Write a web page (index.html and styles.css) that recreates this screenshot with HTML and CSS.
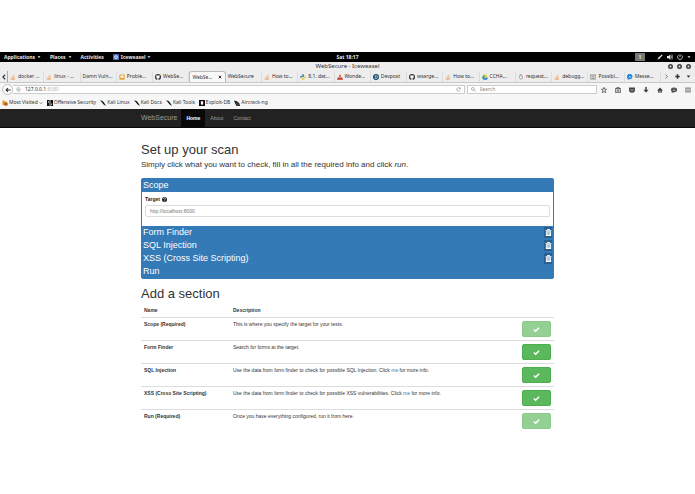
FILE: index.html
```
<!DOCTYPE html>
<html lang="en">
<head>
    <meta charset="UTF-8">
    <meta name="viewport" content="width=device-width, initial-scale=1.0">
    <title>WebSecure</title>
    <link rel="stylesheet" href="styles.css">
</head>
<body>
    <svg class="sprite" aria-hidden="true">
        <symbol id="stack" viewBox="0 0 16 16"><path d="M3 10v5h9v-5M5 12.500h5M5 9.500l5 1M6 6l5 3M9 2l3 5" fill="none" stroke="#e99a58" stroke-width="1.600"/></symbol>
        <symbol id="note" viewBox="0 0 16 16"><rect x="1" y="1" width="14" height="14" rx="2" fill="#e5a537"/><path d="M4 4h8v6H4z" fill="#fff"/></symbol>
        <symbol id="github" viewBox="0 0 16 16"><circle cx="8" cy="8" r="8" fill="#333"/><path d="M4 3l2.500 1h3L12 3l.5 3c1 3-1 4.500-3 5v5h-3v-2c-2 .5-2.500-1-3-1.500 1.500 0 1.500 1 3 .5V11c-2-.5-4-2-3-5z" fill="#fff"/></symbol>
        <symbol id="python" viewBox="0 0 16 16"><path d="M4 2q4-3 7 0v5H5q-2 0-2 4Q0 11 0 8t3-3h5V4H4z" fill="#3c75aa"/><path d="M12 14q-4 3-7 0V9h6q2 0 2-4 3 0 3 3t-3 3H8v1h4z" fill="#e7c93b"/></symbol>
        <symbol id="flame" viewBox="0 0 16 16"><path d="M8 0l3 7H5zM2 9h12l2 6H0z" fill="#c33b30"/></symbol>
        <symbol id="devpost" viewBox="0 0 16 16"><circle cx="8" cy="8" r="8" fill="#174e70"/><path d="M6 4h2q4 0 4 4t-4 4H6z" fill="none" stroke="#fff" stroke-width="1.500"/></symbol>
        <symbol id="drive" viewBox="0 0 16 16"><path d="M5 1L0 10l3 5 5-9z" fill="#22a565"/><path d="M5 1h6l5 9h-6z" fill="#f4c430"/><path d="M3 15l3-5h10l-3 5z" fill="#3879d9"/></symbol>
        <symbol id="request" viewBox="0 0 16 16"><path d="M4 2h7M5 4q-4 8 3 10 6-1 4-7L8 4z" fill="none" stroke="#777" stroke-width="1.500"/></symbol>
        <symbol id="page" viewBox="0 0 16 16"><path d="M1 2h14v12H1zM1 5h14M5 8h6v4H5z" fill="none" stroke="#777" stroke-width="1.500"/></symbol>
        <symbol id="messenger" viewBox="0 0 16 16"><path d="M8 0a8 7 0 1 1-3 14l-3 2v-4A7 7 0 0 1 8 0z" fill="#1685dc"/><path d="M3 10l4-5 2 3 4-2-4 4-2-2z" fill="#fff"/></symbol>
        <symbol id="window" viewBox="0 0 16 16"><rect width="16" height="16" rx="1" fill="#4869b5"/><circle cx="8" cy="8" r="5" fill="#dce8ff"/><path d="M6 5l5 3-4 3z" fill="#4869b5"/></symbol>
        <symbol id="folder" viewBox="0 0 16 16"><path d="M1 1h6v3h6v9H1z" fill="#e49a32"/><path d="M6 7h9v8H6z" fill="#b65d27"/></symbol>
        <symbol id="offsec" viewBox="0 0 16 16"><path d="M0 0h7v16H0zM9 0h7v16H9z" fill="#111"/><path d="M3 3h2v4H3zM11 9h2v4h-2z" fill="#fff"/></symbol>
        <symbol id="kali" viewBox="0 0 16 16"><path d="M0 1l6 1 5 5 5 9-7-5-4-5z" fill="#111"/></symbol>
        <symbol id="exploit" viewBox="0 0 16 16"><path d="M0 0h16v16H0z" fill="#111"/><path d="M5 3h6v6l-2 4H7L5 9z" fill="#fff"/></symbol>
        <symbol id="aircrack" viewBox="0 0 16 16"><path d="M0 1l8 2 6 5 2 8H7L3 9z" fill="#222"/><path d="M5 11l6-4M8 14l5-4" stroke="#bbb"/></symbol>
        <symbol id="back" viewBox="0 0 16 16"><path d="M15 8H3M8 3L3 8l5 5" fill="none" stroke="currentColor" stroke-width="3"/></symbol>
        <symbol id="globe" viewBox="0 0 16 16"><circle cx="8" cy="8" r="6.500" fill="none" stroke="currentColor"/><path d="M2 8h12M8 2q-5 6 0 12 5-6 0-12" fill="none" stroke="currentColor"/></symbol>
        <symbol id="reload" viewBox="0 0 16 16"><path d="M13 10a5.500 5.500 0 1 1-1-6M14 1v5H9" fill="none" stroke="currentColor" stroke-width="2"/></symbol>
        <symbol id="search" viewBox="0 0 16 16"><circle cx="6" cy="6" r="4.500" fill="none" stroke="currentColor" stroke-width="2"/><path d="M9.500 9.500L15 15" stroke="currentColor" stroke-width="2"/></symbol>
        <symbol id="star" viewBox="0 0 16 16"><path d="M8 1l2 5h5l-4 4 1.500 5L8 12l-4.500 3L5 10 1 6h5z" fill="none" stroke="currentColor" stroke-width="2"/></symbol>
        <symbol id="clipboard" viewBox="0 0 16 16"><path d="M1 4h14v11H1zM5 4V1h6v3M4 8h8M4 11h8" fill="none" stroke="currentColor" stroke-width="2"/></symbol>
        <symbol id="pocket" viewBox="0 0 16 16"><path d="M0 1h16v6a8 8 0 0 1-16 0z" fill="currentColor"/><path d="M4 6l4 4 4-4" fill="none" stroke="#f2f2f2" stroke-width="2"/></symbol>
        <symbol id="download" viewBox="0 0 16 16"><path d="M6 0h4v7h5l-7 8-7-8h5z" fill="currentColor"/></symbol>
        <symbol id="home" viewBox="0 0 16 16"><path d="M8 1l8 8h-3v6h-4v-5H7v5H3V9H0z" fill="currentColor"/></symbol>
        <symbol id="chat" viewBox="0 0 16 16"><ellipse cx="8" cy="7.500" rx="8" ry="6.500" fill="currentColor"/><path d="M2 11v5l6-3z" fill="currentColor"/><path d="M4 8q4 4 8 0M5 5h2M9 5h2" fill="none" stroke="#f2f2f2" stroke-width="1.500"/></symbol>
        <symbol id="menu" viewBox="0 0 16 16"><path d="M0 3h16M0 8h16M0 13h16" stroke="currentColor" stroke-width="2"/></symbol>
        <symbol id="plus" viewBox="0 0 16 16"><path d="M8 1v14M1 8h14" stroke="currentColor" stroke-width="5"/></symbol>
        <symbol id="caret" viewBox="0 0 16 16"><path d="M2 5h12l-6 7z" fill="currentColor"/></symbol>
        <symbol id="down" viewBox="0 0 16 16"><path d="M2 5l6 6 6-6" fill="none" stroke="currentColor" stroke-width="2"/></symbol>
        <symbol id="left" viewBox="0 0 16 16"><path d="M11 2L5 8l6 6" fill="none" stroke="currentColor" stroke-width="3"/></symbol>
        <symbol id="right" viewBox="0 0 16 16"><path d="M5 2l6 6-6 6" fill="none" stroke="currentColor" stroke-width="2"/></symbol>
        <symbol id="close" viewBox="0 0 16 16"><path d="M3 3l10 10M13 3L3 13" stroke="currentColor" stroke-width="4"/></symbol>
        <symbol id="ring" viewBox="0 0 16 16"><circle cx="8" cy="8" r="8" fill="#444"/><circle cx="8" cy="8" r="3" fill="#ddd"/></symbol>
        <symbol id="pen" viewBox="0 0 16 16"><path d="M1 15l3-6 9-8 2 2-8 9z" fill="currentColor"/></symbol>
        <symbol id="sound" viewBox="0 0 16 16"><path d="M0 5h4l5-4v14l-5-4H0z" fill="currentColor"/><path d="M11 4q3 4 0 8M13 1q5 7 0 14" fill="none" stroke="currentColor" stroke-width="1.500"/></symbol>
        <symbol id="power" viewBox="0 0 16 16"><path d="M4 3a6.500 6.500 0 1 0 8 0M8 0v8" fill="none" stroke="currentColor" stroke-width="2"/></symbol>
        <symbol id="help" viewBox="0 0 16 16"><circle cx="8" cy="8" r="8" fill="currentColor"/><path d="M5 6q0-3 3-3t3 2.500Q11 7 8 9v1M8 11.500V14" fill="none" stroke="#fff" stroke-width="2"/></symbol>
        <symbol id="trash" viewBox="0 0 16 16"><path d="M5 2V0h6v2h4v2H1V2zM2 5h12v11H2z" fill="currentColor"/><path d="M5 7v6M8 7v6M11 7v6" stroke="#337ab7" stroke-width="1.200"/></symbol>
        <symbol id="check" viewBox="0 0 16 16"><path d="M2 8l4 4 8-8" fill="none" stroke="currentColor" stroke-width="3.500"/></symbol>
    </svg>

    <header class="desktop-bar">
        <nav class="desktop-menu">
            <button>Applications <svg><use href="#caret"/></svg></button>
            <button>Places <svg><use href="#caret"/></svg></button>
            <button>Activities</button>
            <button><svg class="app-icon"><use href="#window"/></svg> Iceweasel <svg><use href="#caret"/></svg></button>
        </nav>
        <time>Sat 18:17</time>
        <div class="tray">
            <span class="workspace">1</span>
            <svg><use href="#pen"/></svg>
            <svg><use href="#sound"/></svg>
            <svg><use href="#power"/></svg>
            <svg class="small"><use href="#caret"/></svg>
        </div>
    </header>

    <section class="browser">
        <div class="titlebar">
            <span class="window-title">WebSecure - Iceweasel</span>
            <div class="window-buttons">
                <button aria-label="Minimize"><svg><use href="#ring"/></svg></button>
                <button aria-label="Maximize"><svg><use href="#ring"/></svg></button>
                <button aria-label="Close"><svg><use href="#ring"/></svg></button>
            </div>
        </div>
        <div class="tabbar">
            <button class="scroll-left" aria-label="Scroll left"><svg><use href="#left"/></svg></button>
            <div class="tabs">
                <button class="tab"><svg><use href="#stack"/></svg>docker ...</button>
                <button class="tab"><svg><use href="#stack"/></svg>linux - ...</button>
                <button class="tab">Damn Vuln...</button>
                <button class="tab"><svg><use href="#note"/></svg>Proble...</button>
                <button class="tab"><svg><use href="#github"/></svg>WebSe...</button>
                <button class="tab active">WebSe...<svg class="tab-close"><use href="#close"/></svg></button>
                <button class="tab">WebSecure</button>
                <button class="tab"><svg><use href="#stack"/></svg>How to...</button>
                <button class="tab"><svg><use href="#python"/></svg>8.1. dat...</button>
                <button class="tab"><svg><use href="#flame"/></svg>Wonde...</button>
                <button class="tab"><svg><use href="#devpost"/></svg>Devpost</button>
                <button class="tab"><svg><use href="#github"/></svg>wsarge...</button>
                <button class="tab"><svg><use href="#stack"/></svg>How to...</button>
                <button class="tab"><svg><use href="#drive"/></svg>CCHA...</button>
                <button class="tab"><svg><use href="#request"/></svg>request...</button>
                <button class="tab"><svg><use href="#stack"/></svg>debugg...</button>
                <button class="tab"><svg><use href="#page"/></svg>Possibl...</button>
                <button class="tab"><svg><use href="#messenger"/></svg>Messe...</button>
            </div>
            <div class="tab-tools">
                <button aria-label="Scroll right"><svg><use href="#right"/></svg></button>
                <button aria-label="New tab"><svg><use href="#plus"/></svg></button>
                <button aria-label="All tabs"><svg><use href="#caret"/></svg></button>
            </div>
        </div>
        <div class="toolbar">
            <button class="back" aria-label="Back"><svg><use href="#back"/></svg></button>
            <div class="address">
                <svg><use href="#globe"/></svg>
                <a href="#">127.0.0.1<span>:8080</span></a>
                <button aria-label="Reload"><svg><use href="#reload"/></svg></button>
            </div>
            <div class="search">
                <svg><use href="#search"/></svg>
                <input type="text" placeholder="Search" aria-label="Search">
            </div>
            <div class="tools">
                <button aria-label="Bookmark"><svg><use href="#star"/></svg></button>
                <button aria-label="Bookmarks list"><svg><use href="#clipboard"/></svg></button>
                <button aria-label="Pocket"><svg><use href="#pocket"/></svg></button>
                <button aria-label="Downloads"><svg><use href="#download"/></svg></button>
                <button aria-label="Home page"><svg><use href="#home"/></svg></button>
                <button aria-label="Chat"><svg><use href="#chat"/></svg></button>
                <button aria-label="Menu"><svg><use href="#menu"/></svg></button>
            </div>
        </div>
        <nav class="bookmarks">
            <a href="#"><svg><use href="#folder"/></svg>Most Visited<svg class="small"><use href="#down"/></svg></a>
            <a href="#"><svg><use href="#offsec"/></svg>Offensive Security</a>
            <a href="#"><svg><use href="#kali"/></svg>Kali Linux</a>
            <a href="#"><svg><use href="#kali"/></svg>Kali Docs</a>
            <a href="#"><svg><use href="#kali"/></svg>Kali Tools</a>
            <a href="#"><svg><use href="#exploit"/></svg>Exploit-DB</a>
            <a href="#"><svg><use href="#aircrack"/></svg>Aircrack-ng</a>
        </nav>
    </section>

    <nav class="navbar">
        <div class="container">
            <a class="brand" href="#">WebSecure</a>
            <a class="active" href="#">Home</a>
            <a href="#">About</a>
            <a href="#">Contact</a>
        </div>
    </nav>

    <main class="container">
        <h1>Set up your scan</h1>
        <p class="lead">Simply click what you want to check, fill in all the required info and click <em>run</em>.</p>

        <div class="panel">
            <h2 class="panel-heading">Scope</h2>
            <div class="panel-body">
                <label for="target">Target <svg><use href="#help"/></svg></label>
                <input id="target" type="text" placeholder="http://localhost:8000">
            </div>
            <h2 class="panel-heading">Form Finder <button aria-label="Remove Form Finder"><svg><use href="#trash"/></svg></button></h2>
            <h2 class="panel-heading">SQL Injection <button aria-label="Remove SQL Injection"><svg><use href="#trash"/></svg></button></h2>
            <h2 class="panel-heading">XSS (Cross Site Scripting) <button aria-label="Remove XSS"><svg><use href="#trash"/></svg></button></h2>
            <h2 class="panel-heading">Run</h2>
        </div>

        <h1>Add a section</h1>
        <table>
            <thead>
                <tr><th class="name">Name</th><th>Description</th><th class="action"></th></tr>
            </thead>
            <tbody>
                <tr>
                    <th>Scope (Required)</th>
                    <td>This is where you specify the target for your tests.</td>
                    <td><button class="add" aria-label="Add Scope" disabled><svg><use href="#check"/></svg></button></td>
                </tr>
                <tr>
                    <th>Form Finder</th>
                    <td>Search for forms at the target.</td>
                    <td><button class="add" aria-label="Add Form Finder"><svg><use href="#check"/></svg></button></td>
                </tr>
                <tr>
                    <th>SQL Injection</th>
                    <td>Use the data from form finder to check for possible SQL Injection. Click <a href="#">me</a> for more info.</td>
                    <td><button class="add" aria-label="Add SQL Injection"><svg><use href="#check"/></svg></button></td>
                </tr>
                <tr>
                    <th>XSS (Cross Site Scripting)</th>
                    <td>Use the data from form finder to check for possible XSS vulnerabilities. Click <a href="#">me</a> for more info.</td>
                    <td><button class="add" aria-label="Add XSS"><svg><use href="#check"/></svg></button></td>
                </tr>
                <tr>
                    <th>Run (Required)</th>
                    <td>Once you have everything configured, run it from here.</td>
                    <td><button class="add" aria-label="Add Run" disabled><svg><use href="#check"/></svg></button></td>
                </tr>
            </tbody>
        </table>
    </main>
</body>
</html>
```
FILE: styles.css
```
:root {
    --ui-font: "Noto Sans", sans-serif;
    --page-font: "Liberation Sans", sans-serif;
    --blue: #337ab7;
}
* {
    box-sizing: border-box;
}
body {
    margin: 0;
    padding: 52px 0;
    background: #fff;
    color: #333;
    font: 5px/7px var(--page-font);
}
a {
    color: inherit;
    text-decoration: none;
}
button {
    display: flex;
    align-items: center;
    padding: 0;
    border: none;
    background: none;
    color: inherit;
    font: inherit;
    white-space: nowrap;
}
input {
    min-width: 0;
    font: inherit;
}
svg {
    flex: none;
    width: 6px;
    height: 6px;
}
svg.small {
    width: 4px;
    height: 4px;
}
.sprite {
    display: none;
}

.desktop-bar {
    display: grid;
    grid-template-columns: 1fr auto 1fr;
    align-items: center;
    height: 10px;
    padding: 0 4px;
    background: #000;
    color: #e8e8e8;
    font: bold 5px/10px var(--ui-font);
}
.desktop-menu {
    display: flex;
    gap: 9px;
}
.desktop-menu button {
    gap: 2px;
}
.desktop-menu svg {
    width: 4px;
    height: 4px;
}
.desktop-menu .app-icon {
    width: 6px;
    height: 6px;
}
.tray {
    display: flex;
    align-items: center;
    justify-content: flex-end;
    gap: 4px;
}
.workspace {
    width: 10px;
    height: 8px;
    margin-right: 8px;
    background: #777;
    line-height: 8px;
    text-align: center;
}

.browser {
    background: #f2f2f2;
    color: #333;
    font: 5px/7px var(--ui-font);
}
.titlebar {
    display: grid;
    grid-template-columns: 1fr auto 1fr;
    align-items: center;
    height: 9px;
    padding: 0 4px;
    background: #ededed;
}
.window-title {
    grid-column: 2;
    font-size: 6px;
}
.window-buttons {
    display: flex;
    justify-content: flex-end;
    gap: 4px;
}
.window-buttons svg {
    width: 5px;
    height: 5px;
}
.tabbar {
    display: flex;
    height: 12px;
    border-bottom: 1px solid #c8c8c8;
    background: #ededed;
}
.scroll-left {
    width: 8px;
    justify-content: center;
    border-right: 1px solid #aaa;
}
.tabs {
    flex: 1;
    display: grid;
    grid-template-columns: repeat(18, 1fr);
    min-width: 0;
}
.tab {
    gap: 2px;
    min-width: 0;
    padding-left: 2px;
    border-right: 1px solid #ddd;
    overflow: hidden;
}
.tab.active {
    border: 1px solid #bbb;
    border-bottom: none;
    border-radius: 3px 3px 0 0;
    background: #f8f8f8;
}
.tab .tab-close {
    width: 4px;
    height: 4px;
    margin: 0 3px 0 auto;
}
.tab-tools {
    display: flex;
    align-items: center;
    gap: 6px;
    padding: 0 4px 0 3px;
}
.tab-tools svg {
    width: 5px;
    height: 5px;
}

.toolbar {
    display: flex;
    align-items: center;
    height: 13px;
    padding: 0 4px 0 2px;
    background: #f6f6f6;
}
.back {
    justify-content: center;
    width: 11px;
    height: 11px;
    border: 1px solid #bbb;
    border-radius: 50%;
    background: #fff;
}
.address,
.search {
    display: flex;
    align-items: center;
    gap: 4px;
    height: 9px;
    padding: 0 3px;
    border: 1px solid #ccc;
    background: #fff;
}
.address {
    flex: 1;
    border-left: none;
}
.address svg,
.search svg {
    width: 5px;
    height: 5px;
    color: #888;
}
.address span {
    color: #bbb;
}
.address button {
    margin-left: auto;
}
.search {
    width: 19%;
    margin-left: 2px;
}
.search input {
    flex: 1;
    padding: 0;
    border: none;
    background: none;
}
.search input::placeholder {
    color: #888;
}
.tools {
    display: flex;
    justify-content: space-between;
    width: 13%;
    margin-left: 4px;
    color: #444;
}
.bookmarks {
    display: flex;
    align-items: center;
    gap: 4px;
    height: 13px;
    padding: 0 2px;
    background: #f6f6f6;
}
.bookmarks a {
    display: flex;
    align-items: center;
    gap: 1px;
}

.container {
    width: 60%;
    margin: 0 auto;
    padding: 0 2px;
}
.navbar {
    background: #222;
    border-bottom: 1px solid #080808;
    color: #9d9d9d;
}
.navbar .container {
    display: flex;
    line-height: 18px;
}
.navbar a {
    padding: 0 5px;
}
.navbar .brand {
    padding: 0 4px 0 0;
    font-size: 7px;
}
.navbar .active {
    background: #080808;
    color: #fff;
    font-weight: bold;
}

h1 {
    margin: 0 0 3px;
    font-size: 13px;
    font-weight: 500;
    line-height: 15px;
}
main h1:first-child {
    margin-top: 14px;
}
.lead {
    margin: 0 0 8px;
    font-size: 8px;
    line-height: 10px;
}
.panel {
    margin-bottom: 7px;
    border: 1px solid var(--blue);
    border-radius: 2px;
    background: var(--blue);
}
.panel-heading {
    display: flex;
    align-items: center;
    justify-content: space-between;
    margin: 0;
    padding: 0 1px;
    color: #fff;
    font-size: 9px;
    font-weight: 500;
    line-height: 13px;
}
.panel-heading button {
    justify-content: center;
    width: 8px;
    height: 11px;
    background: #286090;
}
.panel-heading svg {
    width: 7px;
    height: 7px;
}
.panel-body {
    padding: 4px 3px 9px;
    background: #fff;
}
.panel-body label {
    display: flex;
    align-items: center;
    gap: 2px;
    margin-bottom: 2px;
    color: #222;
    font-weight: bold;
}
.panel-body svg {
    width: 5px;
    height: 5px;
}
.panel-body input {
    display: block;
    width: 100%;
    height: 12px;
    padding: 0 4px;
    border: 1px solid #ddd;
    border-radius: 2px;
}
.panel-body input::placeholder {
    color: #777;
}

table {
    width: 100%;
    border-collapse: collapse;
}
th,
td {
    padding: 3px;
    border-bottom: 1px solid #ddd;
    text-align: left;
    vertical-align: top;
}
tbody tr:last-child > * {
    border-bottom: none;
}
.name {
    width: 89px;
}
.action {
    width: 35px;
}
td a {
    color: var(--blue);
}
.add {
    justify-content: center;
    width: 100%;
    height: 16px;
    border: 1px solid #4cae4c;
    border-radius: 2px;
    background: #5cb85c;
    color: #fff;
}
.add:disabled {
    opacity: .65;
}
.add svg {
    width: 7px;
    height: 7px;
}
```
